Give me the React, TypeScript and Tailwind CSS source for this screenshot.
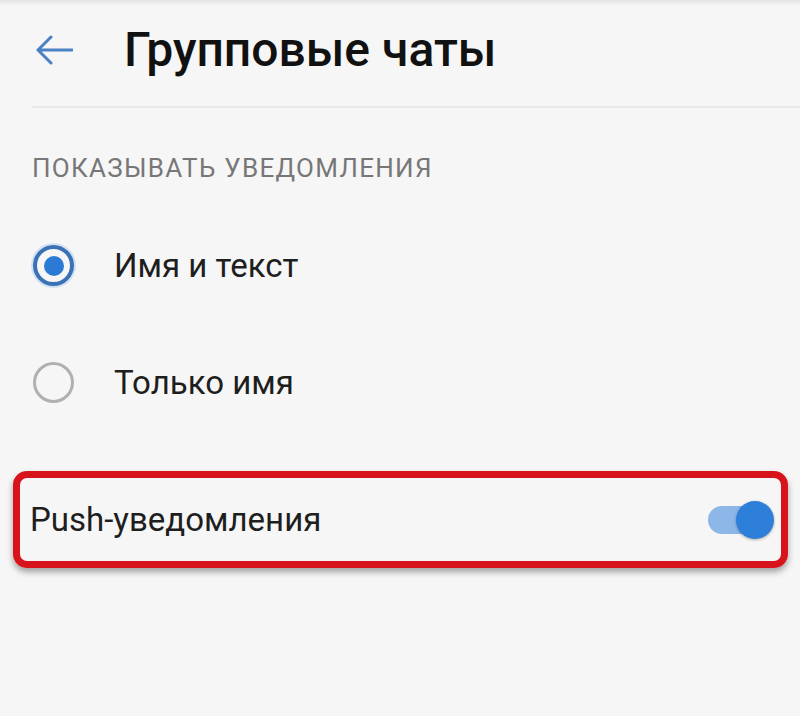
import React from 'react';

export default function GroupChatsSettings() {
  const options = [
    { label: "Имя и текст", checked: true },
    { label: "Только имя", checked: false },
  ];

  return (
    <div className="min-h-[716px] w-[800px] bg-[#f6f6f6] font-['Roboto',sans-serif] text-[#1e1e1e]">
      <div className="h-[6px] bg-gradient-to-b from-[#e4e4e4] to-[#f6f6f6]" />

      {/* header */}
      <header className="flex items-center h-[88px] pl-[35px]">
        <svg width="38" height="32" viewBox="0 0 38 32" fill="none">
          <path d="M37 16H3M16 3L3 16L16 29" stroke="#4a80c4" strokeWidth="3" strokeLinecap="round" strokeLinejoin="round" />
        </svg>
        <h1 className="ml-[51px] text-[48px] font-medium leading-none text-[#111]">Групповые чаты</h1>
      </header>
      <div className="ml-[32px] mt-[12px] h-[2px] bg-[#e9e9e9]" />

      <div className="mt-[44px] pl-[32px] text-[26px] leading-[32px] tracking-[1.3px] text-[#777]">
        ПОКАЗЫВАТЬ УВЕДОМЛЕНИЯ
      </div>

      <div className="mt-[23px]">
        {options.map((opt) => (
          <div key={opt.label} className="flex items-center h-[117px] pl-[33px]">
            {opt.checked ? (
              <div className="w-[41px] h-[41px] rounded-full border-[4px] border-[#3a72b5] flex items-center justify-center shadow-[0_0_0_2px_rgba(140,185,235,0.35)]">
                <div className="w-[20px] h-[20px] rounded-full bg-[#2b7bd6]" />
              </div>
            ) : (
              <div className="w-[41px] h-[41px] rounded-full border-[3px] border-[#b0b0b0]" />
            )}
            <span className="ml-[40px] text-[33px] leading-none">{opt.label}</span>
          </div>
        ))}
      </div>

      {/* highlighted row */}
      <div className="mt-[30px] ml-[13px] w-[775px] h-[97px] rounded-[14px] border-[7px] border-[#d7141c] shadow-[0_4px_6px_rgba(0,0,0,0.35)] flex items-center justify-between pl-[10px] pr-[7px]">
        <span className="text-[33px] leading-none">Push-уведомления</span>
        <div className="relative w-[66px] h-[38px]">
          <div className="absolute left-0 top-[5px] w-[52px] h-[28px] rounded-full bg-[#8db7e8]" />
          <div className="absolute right-0 top-0 w-[38px] h-[38px] rounded-full bg-[#2e7fd9] shadow-[0_1px_3px_rgba(0,0,0,0.3)]" />
        </div>
      </div>
    </div>
  );
}
